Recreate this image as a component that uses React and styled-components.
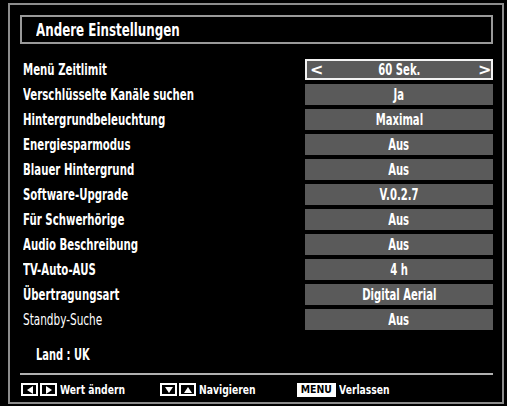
import React from "react";
import styled, { createGlobalStyle } from "styled-components";

const GlobalStyle = createGlobalStyle`
  html, body {
    margin: 0;
    padding: 0;
    background: #000;
  }
`;

const font = `"DejaVu Sans", sans-serif`;

const Screen = styled.div`
  width: 507px;
  height: 406px;
  box-sizing: border-box;
  padding: 3px 3px 2px 8px;
  background: #000;
  font-family: ${font};
  color: #fff;
`;

const Frame = styled.div`
  height: 100%;
  box-sizing: border-box;
  border: 2px solid #8c8c8c;
  display: flex;
  flex-direction: column;
`;

// the TV font is a narrow one; squeeze DejaVu to its width
const Narrow = styled.span`
  display: inline-block;
  white-space: nowrap;
  transform: scaleX(${(p) => p.$k || 0.68});
  transform-origin: ${(p) => (p.$center ? "center" : "left")} center;
`;

const TitleBox = styled.div`
  margin: 10px 9px 0 10px;
  height: 29px;
  box-sizing: border-box;
  border: 2px solid #9a9a9a;
  display: flex;
  align-items: center;
  padding-left: 14px;
  font-size: 18px;
  font-weight: 700;
`;

const List = styled.div`
  margin-top: 15px;
  padding: 0 9px 0 13px;
  display: grid;
  grid-template-columns: 1fr 188px;
  grid-auto-rows: 21px;
  row-gap: 4px;
  align-items: center;
`;

const Label = styled.div`
  font-size: 15px;
  font-weight: ${(p) => (p.$light ? 400 : 700)};
  white-space: nowrap;
`;

const Value = styled.div`
  height: 21px;
  box-sizing: border-box;
  background: #5a5a5a;
  border: ${(p) => (p.$selected ? "2px solid #f2f2f2" : "none")};
  display: flex;
  align-items: center;
  justify-content: ${(p) => (p.$selected ? "space-between" : "center")};
  padding: 0 3px;
  font-size: 15px;
  font-weight: 700;
`;

const Arrow = styled.span`
  font-size: 16px;
  font-weight: 700;
  width: 10px;
  text-align: center;
`;

const Land = styled.div`
  margin-top: 16px;
  padding-left: 26px;
  font-size: 15px;
  font-weight: 700;
`;

const Divider = styled.div`
  margin: 9px 9px 0 10px;
  height: 2px;
  background: #b0b0b0;
`;

const Footer = styled.div`
  display: flex;
  align-items: center;
  padding-left: 11px;
  margin-top: 7px;
  font-size: 13px;
  font-weight: 700;
`;

const Hint = styled.div`
  display: flex;
  align-items: center;
  gap: 3px;
  width: ${(p) => p.$w}px;
`;

const KeyPair = styled.div`
  display: flex;
  gap: 2px;
`;

const Key = styled.div`
  width: 17px;
  height: 13px;
  box-sizing: border-box;
  border: 2px solid #fff;
  display: flex;
  align-items: center;
  justify-content: center;
`;

const MenuKey = styled.div`
  height: 14px;
  width: 39px;
  box-sizing: border-box;
  border: 2px solid #fff;
  background: #fff;
  color: #000;
  font-size: 11px;
  font-weight: 700;
  display: flex;
  align-items: center;
  justify-content: center;
  overflow: hidden;
`;

const Tri = ({ dir }) => {
  const pts = {
    left: "8,1 8,9 2,5",
    right: "2,1 2,9 8,5",
    down: "1,2 9,2 5,8",
    up: "1,8 9,8 5,2",
  }[dir];
  return (
    <svg width="10" height="10" viewBox="0 0 10 10">
      <polygon points={pts} fill="#fff" />
    </svg>
  );
};

const rows = [
  ["Menü Zeitlimit", "60 Sek.", true],
  ["Verschlüsselte Kanäle suchen", "Ja"],
  ["Hintergrundbeleuchtung", "Maximal"],
  ["Energiesparmodus", "Aus"],
  ["Blauer Hintergrund", "Aus"],
  ["Software-Upgrade", "V.0.2.7"],
  ["Für Schwerhörige", "Aus"],
  ["Audio Beschreibung", "Aus"],
  ["TV-Auto-AUS", "4 h"],
  ["Übertragungsart", "Digital Aerial"],
  ["Standby-Suche", "Aus", false, true],
];

export default function App() {
  return (
    <>
      <GlobalStyle />
      <Screen>
        <Frame>
          <TitleBox>
            <Narrow $k={0.66}>Andere Einstellungen</Narrow>
          </TitleBox>
          <List>
            {rows.map(([label, value, selected, light]) => (
              <React.Fragment key={label}>
                <Label $light={light}>
                  <Narrow $k={light ? 0.7 : 0.68}>{label}</Narrow>
                </Label>
                <Value $selected={selected}>
                  {selected && <Arrow>&lt;</Arrow>}
                  <Narrow $center $k={0.67}>{value}</Narrow>
                  {selected && <Arrow>&gt;</Arrow>}
                </Value>
              </React.Fragment>
            ))}
          </List>
          <Land>
            <Narrow $k={0.66}>Land : UK</Narrow>
          </Land>
          <Divider />
          <Footer>
            <Hint $w={139}>
              <KeyPair>
                <Key><Tri dir="left" /></Key>
                <Key><Tri dir="right" /></Key>
              </KeyPair>
              <Narrow $k={0.71}>Wert ändern</Narrow>
            </Hint>
            <Hint $w={137}>
              <KeyPair>
                <Key><Tri dir="down" /></Key>
                <Key><Tri dir="up" /></Key>
              </KeyPair>
              <Narrow $k={0.71}>Navigieren</Narrow>
            </Hint>
            <Hint>
              <MenuKey>
                <Narrow $center $k={0.85}>MENU</Narrow>
              </MenuKey>
              <Narrow $k={0.71}>Verlassen</Narrow>
            </Hint>
          </Footer>
        </Frame>
      </Screen>
    </>
  );
}
